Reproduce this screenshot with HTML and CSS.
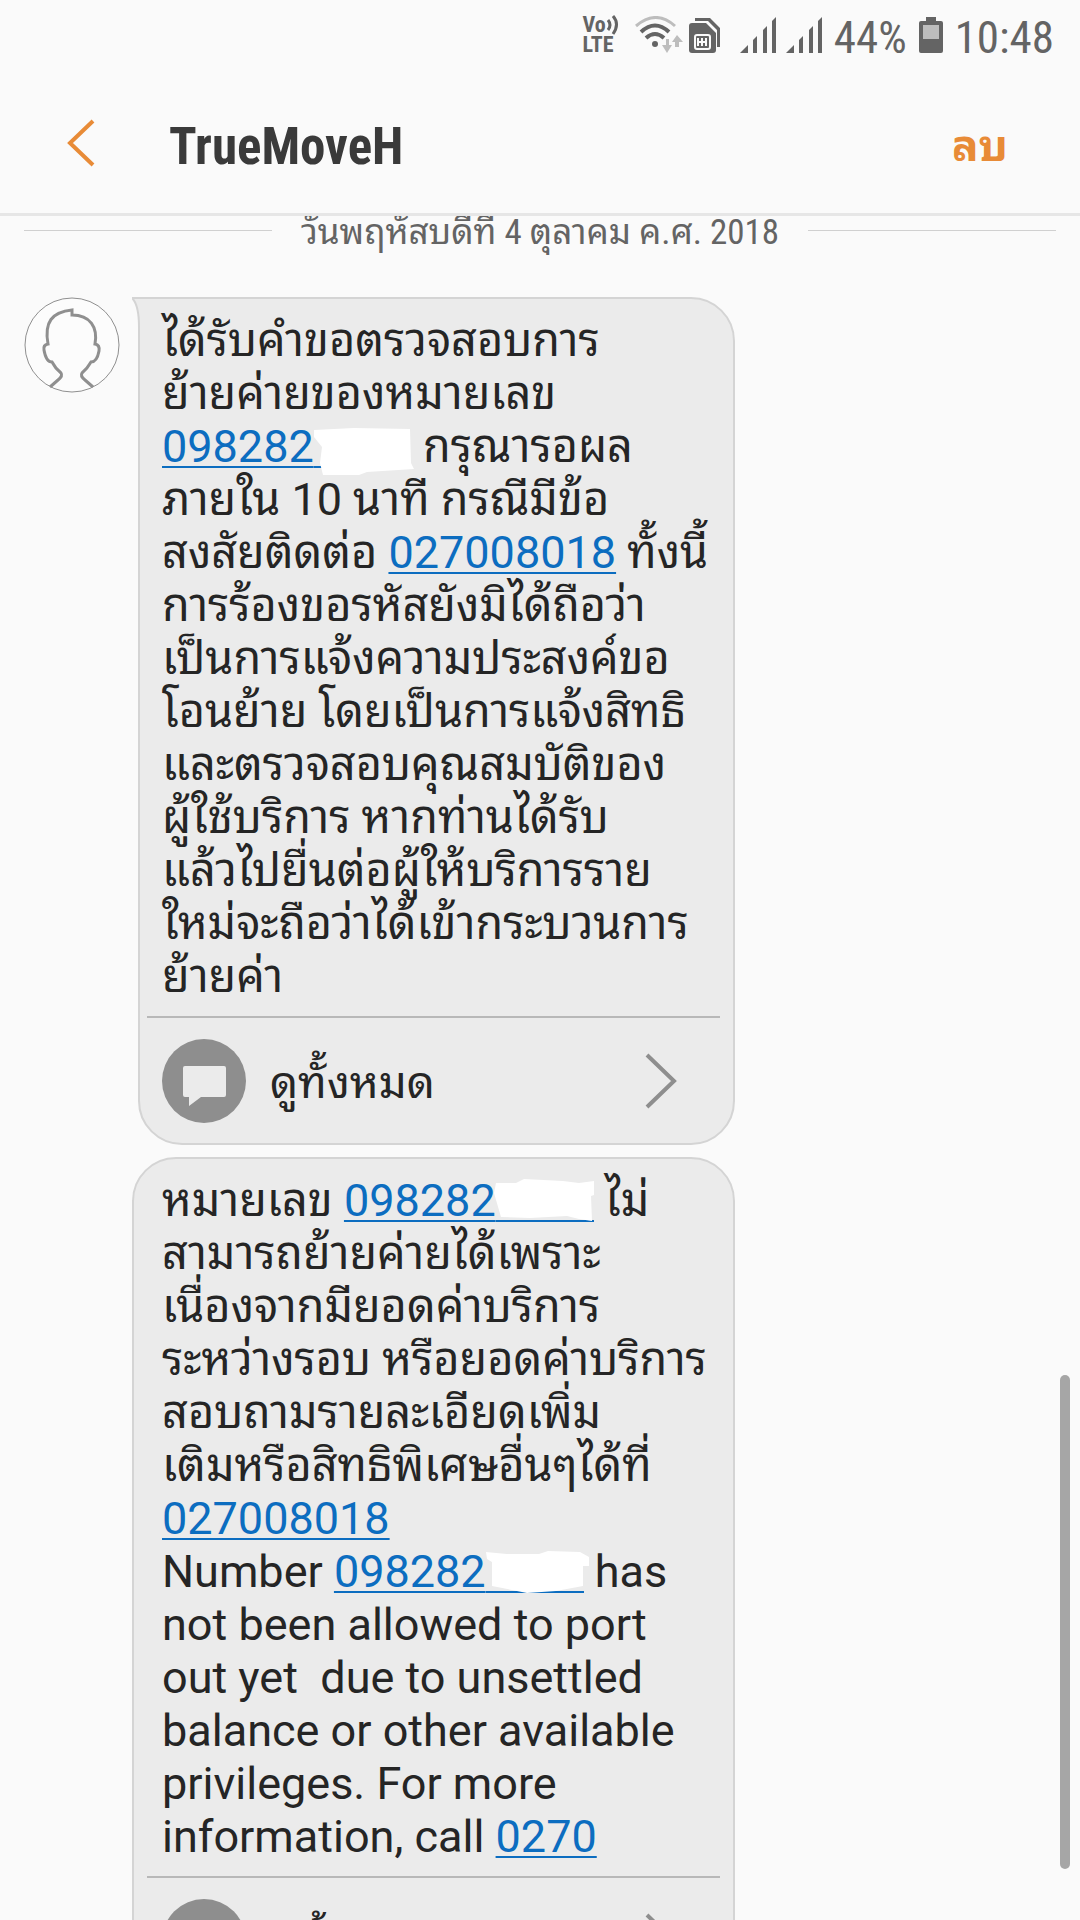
FILE: index.html
```html
<!DOCTYPE html>
<html lang="th">
<head>
<meta charset="utf-8">
<meta name="viewport" content="width=device-width, initial-scale=1">
<title>TrueMoveH</title>
<link rel="stylesheet" href="styles.css">
</head>
<body>
<div class="screen">
  <div class="status-bar">
    <span class="volte"><span class="vo">Vo<svg width="13" height="20" viewBox="0 0 13 20" aria-hidden="true"><path d="M2 5Q6 10 2 15M7 1Q14 9 7 19" fill="none" stroke="#646464" stroke-width="3"/></svg></span><span>LTE</span></span>
    <svg class="wifi" width="48" height="38" viewBox="0 0 48 38" aria-label="Wi-Fi">
      <path d="M1 10Q21-7 40 10" fill="none" stroke="#bdbdbd" stroke-width="3"/>
      <path d="M6 16Q20 3 34 16M11 22Q20 14 29 22" fill="none" stroke="#646464" stroke-width="4"/>
      <circle cx="20" cy="28" r="3" fill="#646464"/>
      <path d="M29 29H31V23H34V29H37L32 37L27 29zM40 31V26H37L42 19L48 26H44V31z" fill="#bdbdbd"/>
    </svg>
    <svg class="sim" width="33" height="37" viewBox="0 0 33 37" aria-label="SIM">
      <path d="M6 1H21L31 11V30H28V13L19 4H6z" fill="#646464"/>
      <path d="M3 6H17L27 16V33Q27 36 24 36H3Q0 36 0 33V9Q0 6 3 6z" fill="#646464"/>
      <rect x="6" y="18" width="15" height="14" rx="2" fill="none" stroke="#fafafa" stroke-width="2"/>
      <path d="M9 21v8M13 21v8M17 21v8M9 25h9" stroke="#fafafa" stroke-width="2"/>
    </svg>
    <svg class="signal" width="36" height="36" viewBox="0 0 36 36" aria-label="Signal 1"><path d="M0 36L8 28V36zM13 36V23L17 19V36zM23 36V13L27 9V36zM32 36V4L36 0V36z" fill="#646464"/></svg>
    <svg class="signal" width="36" height="36" viewBox="0 0 36 36" aria-label="Signal 2"><path d="M0 36L8 28V36zM13 36V23L17 19V36zM23 36V13L27 9V36zM32 36V4L36 0V36z" fill="#646464"/></svg>
    <span class="status-text percent">44%</span>
    <svg class="battery" width="24" height="36" viewBox="0 0 24 36" aria-label="Battery"><path d="M7 0H17V4H22Q24 4 24 6V34Q24 36 22 36H2Q0 36 0 34V6Q0 4 2 4H7z" fill="#646464"/><path d="M4 8H20V22H4z" fill="#bdbdbd"/></svg>
    <time class="status-text">10:48</time>
  </div>
  <header class="app-bar">
    <button class="back" type="button" aria-label="ย้อนกลับ"><svg width="28" height="48" viewBox="0 0 28 48"><path d="M26 2L3 24L26 46" fill="none" stroke="#e88b37" stroke-width="4"/></svg></button>
    <h1>TrueMoveH</h1>
    <button class="delete" type="button">ลบ</button>
  </header>
  <main class="thread">
    <div class="date"><span>วันพฤหัสบดีที่ 4 ตุลาคม ค.ศ. 2018</span></div>
    <div class="messages">
      <svg class="avatar" width="96" height="96" viewBox="0 0 96 96" aria-hidden="true">
        <circle cx="48" cy="48" r="47" fill="#fcfcfc" stroke="#8f8f8f"/>
        <path d="M26 90L34 83Q39 79 37 76Q31 71 28 65Q22 65 20 53Q19 48 24 47C20 25 28 15 48 13V18C66 18 74 30 71 47Q76 48 75 54Q73 65 67 65Q63 72 58 76Q56 79 61 83L69 90" fill="none" stroke="#8f8f8f" stroke-width="3"/>
      </svg>
      <div class="bubbles">
        <article class="bubble tailed">
          <svg class="tail" width="12" height="48" viewBox="0 0 12 48" aria-hidden="true"><path d="M0 1H12V48H7V30Q7 8 0 1z" fill="#ebebeb"/><path d="M12 1H0Q7 8 7 30V48" fill="none" stroke="#d4d4d4" stroke-width="2"/></svg>
          <p>ได้รับคำขอตรวจสอบการ<br>ย้ายค่ายของหมายเลข<br><a href="#">098282<svg class="mask" width="98" height="44" viewBox="0 0 98 44" aria-hidden="true"><path d="M0 38H9V40H0z" fill="#0c6dc0"/><path d="M0 2L40 0L96 1L97 35L100 41L53 44L45 47H9L6 35L8 19L0 9z" fill="#fff"/></svg></a> กรุณารอผล<br>ภายใน 10 นาที กรณีมีข้อ<br>สงสัยติดต่อ <a href="#">027008018</a> ทั้งนี้<br>การร้องขอรหัสยังมิได้ถือว่า<br>เป็นการแจ้งความประสงค์ขอ<br>โอนย้าย โดยเป็นการแจ้งสิทธิ<br>และตรวจสอบคุณสมบัติของ<br>ผู้ใช้บริการ หากท่านได้รับ<br>แล้วไปยื่นต่อผู้ให้บริการราย<br>ใหม่จะถือว่าได้เข้ากระบวนการ<br>ย้ายค่า</p>
          <button class="see-all" type="button">
            <svg width="84" height="84" viewBox="0 0 84 84" aria-hidden="true"><circle cx="42" cy="42" r="42" fill="#8e8e8e"/><path d="M23 27H62Q64 27 64 29V56Q64 58 62 58H39L27 67V58H23Q21 58 21 56V29Q21 27 23 27z" fill="#ebebeb"/></svg>
            <span>ดูทั้งหมด</span>
            <svg width="32" height="56" viewBox="0 0 32 56" aria-hidden="true"><path d="M2 2L29 28L2 54" fill="none" stroke="#8e8e8e" stroke-width="4"/></svg>
          </button>
        </article>
        <article class="bubble">
          <p>หมายเลข <a href="#">098282<svg class="mask" width="98" height="44" viewBox="0 0 98 44" aria-hidden="true"><path d="M0 38H98V40H0z" fill="#0c6dc0"/><path d="M0 1H20L28-3L67-1L83 1L98-1V13L95 14L96 39L83 37L71 34L34 36L5 35L-2 11z" fill="#fff"/></svg></a> ไม่<br>สามารถย้ายค่ายได้เพราะ<br>เนื่องจากมียอดค่าบริการ<br>ระหว่างรอบ หรือยอดค่าบริการ<br>สอบถามรายละเอียดเพิ่ม<br>เติมหรือสิทธิพิเศษอื่นๆได้ที่<br><a href="#">027008018</a><br>Number <a href="#">098282<svg class="mask" width="98" height="44" viewBox="0 0 98 44" aria-hidden="true"><path d="M0 38H98V40H0z" fill="#0c6dc0"/><path d="M0-1L21 1H53L62-2L94-1L103 4V13H97V33L70 38L41 40L6 33V9L1 6z" fill="#fff"/></svg></a> has<br>not been allowed to port<br>out yet&nbsp; due to unsettled<br>balance or other available<br>privileges. For more<br>information, call <a href="#">0270</a></p>
          <button class="see-all" type="button">
            <svg width="84" height="84" viewBox="0 0 84 84" aria-hidden="true"><circle cx="42" cy="42" r="42" fill="#8e8e8e"/><path d="M23 27H62Q64 27 64 29V56Q64 58 62 58H39L27 67V58H23Q21 58 21 56V29Q21 27 23 27z" fill="#ebebeb"/></svg>
            <span>ดูทั้งหมด</span>
            <svg width="32" height="56" viewBox="0 0 32 56" aria-hidden="true"><path d="M2 2L29 28L2 54" fill="none" stroke="#8e8e8e" stroke-width="4"/></svg>
          </button>
        </article>
      </div>
    </div>
    <div class="scrollbar"></div>
  </main>
</div>
</body>
</html>
```
FILE: styles.css
```css
* { box-sizing: border-box; }
body {
  margin: 0;
  background: #fafafa;
  color: #252525;
  font-family: Roboto, "Noto Sans Thai Looped", "Noto Looped Thai", "Droid Sans Thai", Loma, "Noto Sans Thai", sans-serif;
}
button { border: 0; padding: 0; background: none; font: inherit; color: inherit; }
svg { flex: none; }
.screen { display: flex; flex-direction: column; height: 100vh; overflow: hidden; }

.status-bar {
  display: flex;
  align-items: center;
  justify-content: flex-end;
  flex: none;
  height: 72px;
  padding: 0 26px 2px 0;
  color: #646464;
}
.volte {
  display: flex;
  flex-direction: column;
  margin-right: 16px;
  font: 700 22px/20px "Roboto Condensed", Roboto, sans-serif;
}
.vo { display: flex; }
.wifi { margin-right: 6px; }
.sim { margin-right: 18px; }
.signal { margin-right: 10px; }
.status-text { margin-top: 6px; font: 400 45px/48px "Roboto Condensed", Roboto, sans-serif; }
.percent { margin-left: 2px; }
.battery { margin: 0 12px; }

.app-bar {
  display: flex;
  align-items: center;
  flex: none;
  height: 144px;
  padding: 0 72px 0 67px;
  border-bottom: 3px solid #e6e6e6;
}
.back { display: flex; width: 102px; }
h1 {
  flex: 1;
  margin: 0;
  padding-top: 8px;
  color: #3a3a3a;
  font: 700 51px/60px "Roboto Condensed", Roboto, sans-serif;
}
.delete { padding-bottom: 4px; color: #e88b37; font-size: 44px; font-weight: 700; }

.thread { position: relative; flex: 1; min-height: 0; overflow: hidden; }
.date {
  display: flex;
  align-items: center;
  gap: 29px;
  height: 28px;
  padding: 0 24px;
  color: #646464;
  font: 400 35px/44px "Roboto Condensed", Roboto, "Noto Sans Thai Looped", "Noto Looped Thai", "Droid Sans Thai", Loma, "Noto Sans Thai", sans-serif;
  white-space: nowrap;
}
.date span { padding-top: 6px; }
.date::before, .date::after { content: ""; flex: 1; height: 1px; background: #d0d0d0; }
.messages {
  display: grid;
  grid-template-columns: 96px minmax(0, 603px);
  gap: 12px;
  align-items: start;
  padding: 53px 24px 0;
}
.bubbles { display: flex; flex-direction: column; gap: 12px; }
.bubble {
  position: relative;
  padding: 15px 13px 20px;
  border: 2px solid #d4d4d4;
  border-radius: 44px;
  background: #ebebeb;
}
.tailed { margin-left: 6px; padding-left: 7px; border-top-left-radius: 0; }
.tail { position: absolute; top: -2px; left: -8px; }
.bubble p {
  margin: 0;
  padding: 0 15px 13px;
  border-bottom: 2px solid #b8b8b8;
  font-size: 45px;
  line-height: 53px;
  white-space: nowrap;
}
.bubble a {
  color: #0c6dc0;
  text-decoration: underline;
  text-decoration-thickness: 2px;
  text-underline-offset: 4px;
  text-decoration-skip-ink: none;
}
.mask { overflow: visible; vertical-align: -10px; }
.see-all {
  display: flex;
  align-items: center;
  gap: 24px;
  width: 100%;
  padding: 21px 43px 0 15px;
  font-size: 44px;
  line-height: 80px;
  text-align: left;
}
.see-all span { flex: 1; padding-top: 4px; }

.scrollbar {
  position: absolute;
  top: 68%;
  right: 10px;
  bottom: 51px;
  width: 10px;
  border-radius: 5px;
  background: #a6a6a6;
}
```
